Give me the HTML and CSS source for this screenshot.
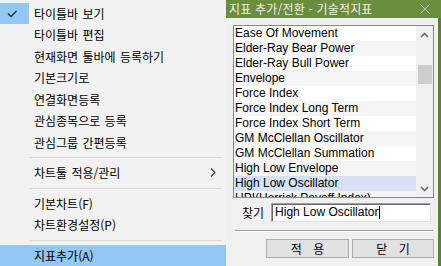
FILE: index.html
```html
<!DOCTYPE html>
<html lang="ko">
<head>
<meta charset="utf-8">
<title>지표 추가</title>
<link rel="stylesheet" href="styles.css">
</head>
<body>
<div class="screen">
  <div class="menu">
    <div class="item checked">
      <span class="gutter"><svg width="29" height="21" viewBox="0 0 29 21"><polyline points="8,10.5 11,13.5 16.5,8" fill="none" stroke="#2b2b2b" stroke-width="1.4"/></svg></span>
      <span class="label">타이틀바 보기</span>
    </div>
    <div class="item"><span class="gutter"></span><span class="label">타이틀바 편집</span></div>
    <div class="item"><span class="gutter"></span><span class="label">현재화면 툴바에 등록하기</span></div>
    <div class="item"><span class="gutter"></span><span class="label">기본크기로</span></div>
    <div class="item"><span class="gutter"></span><span class="label">연결화면등록</span></div>
    <div class="item"><span class="gutter"></span><span class="label">관심종목으로 등록</span></div>
    <div class="item"><span class="gutter"></span><span class="label">관심그룹 간편등록</span></div>
    <div class="sep"></div>
    <div class="item"><span class="gutter"></span><span class="label">차트툴 적용/관리</span>
      <svg class="arrow" width="6" height="9" viewBox="0 0 6 9"><polyline points="1,0.5 5,4.5 1,8.5" fill="none" stroke="#333" stroke-width="1.1"/></svg>
    </div>
    <div class="sep"></div>
    <div class="item"><span class="gutter"></span><span class="label">기본차트(F)</span></div>
    <div class="item"><span class="gutter"></span><span class="label">차트환경설정(P)</span></div>
    <div class="sep"></div>
    <div class="item active"><span class="gutter"></span><span class="label">지표추가(A)</span></div>
  </div>

  <div class="dialog">
    <div class="titlebar">
      <span class="title">지표 추가/전환 - 기술적지표</span>
      <svg class="close" width="10" height="10" viewBox="0 0 10 10"><path d="M0.5 0.5 L9.5 9.5 M9.5 0.5 L0.5 9.5" stroke="#b9c9a6" stroke-width="1"/></svg>
    </div>
    <div class="frame">
      <div class="body">
        <div class="listbox">
          <div class="rows">
            <div class="row">Ease Of Movement</div>
            <div class="row">Elder-Ray Bear Power</div>
            <div class="row">Elder-Ray Bull Power</div>
            <div class="row">Envelope</div>
            <div class="row">Force Index</div>
            <div class="row">Force Index Long Term</div>
            <div class="row">Force Index Short Term</div>
            <div class="row">GM McClellan Oscillator</div>
            <div class="row">GM McClellan Summation</div>
            <div class="row">High Low Envelope</div>
            <div class="row selected">High Low Oscillator</div>
            <div class="row">HPI(Herrick Payoff Index)</div>
          </div>
          <div class="scrollbar">
            <div class="sb-btn"><svg width="9" height="6" viewBox="0 0 9 6"><polyline points="1,5 4.5,1.5 8,5" fill="none" stroke="#606060" stroke-width="1.5"/></svg></div>
            <div class="thumb"></div>
            <div class="track"></div>
            <div class="sb-btn"><svg width="9" height="6" viewBox="0 0 9 6"><polyline points="1,1 4.5,4.5 8,1" fill="none" stroke="#606060" stroke-width="1.5"/></svg></div>
          </div>
        </div>
        <div class="search">
          <span class="find">찾기</span>
          <div class="input">High Low Oscillator<span class="caret"></span></div>
        </div>
        <div class="etched"></div>
        <div class="buttons">
          <button class="btn apply">적 용</button>
          <button class="btn closebtn">닫 기</button>
        </div>
      </div>
      <div class="edge"></div>
    </div>
  </div>
</div>
</body>
</html>
```
FILE: styles.css
```css
html, body {
  margin: 0;
  padding: 0;
}
body {
  width: 441px;
  height: 266px;
  overflow: hidden;
  background: #f0f0f0;
  font-family: "Noto Sans CJK KR", "Noto Sans", sans-serif;
  font-size: 12px;
  color: #000;
}
.screen {
  display: flex;
  width: 441px;
  height: 266px;
}

/* context menu */
.menu {
  width: 226px;
  flex: none;
  background: #f2f2f2;
  padding-top: 2.5px;
  box-sizing: border-box;
}
.item {
  display: flex;
  align-items: center;
  height: 21.5px;
}
.gutter {
  width: 29px;
  height: 100%;
  flex: none;
  display: flex;
  align-items: center;
  justify-content: center;
}
.checked .gutter {
  background: #94c8f4;
}
.label {
  flex: 1;
  margin-left: 5px;
  line-height: 21.5px;
  white-space: pre;
  word-spacing: 1px;
}
.arrow {
  margin-right: 10px;
  flex: none;
}
.item.active {
  background: #94c8f4;
}
.sep {
  height: 9px;
  display: flex;
  align-items: center;
  padding-left: 29px;
  padding-right: 4px;
}
.sep::after {
  content: "";
  flex: 1;
  height: 1px;
  background: #d7d7d7;
}

/* dialog */
.dialog {
  flex: 1;
  display: flex;
  flex-direction: column;
  min-width: 0;
}
.titlebar {
  height: 18px;
  flex: none;
  background: #6b8d3f;
  display: flex;
  align-items: center;
  padding-left: 3px;
  color: #eef2e6;
}
.title {
  flex: 1;
  line-height: 18px;
  letter-spacing: 0.2px;
  white-space: pre;
}
.close {
  margin-right: 11px;
}
.frame {
  flex: 1;
  display: flex;
}
.body {
  flex: 1;
  display: flex;
  flex-direction: column;
  padding: 7px 4px 0 7px;
  background: #f0f0f0;
}
.edge {
  width: 3px;
  background: #5e7e36;
}
.listbox {
  height: 173px;
  box-sizing: border-box;
  border: 1px solid #828790;
  background: #fff;
  display: flex;
}
.rows {
  flex: 1;
  overflow: hidden;
  font-family: "Liberation Sans", Arial, sans-serif;
  font-size: 12px;
}
.row {
  height: 15px;
  line-height: 15px;
  padding-left: 1px;
  white-space: nowrap;
}
.row:nth-child(even) {
  background: #f5f5f5;
}
.row.selected {
  background: #d6e2f3;
}
.scrollbar {
  width: 17px;
  flex: none;
  background: #f0f0f0;
  display: flex;
  flex-direction: column;
}
.sb-btn {
  height: 17px;
  display: flex;
  align-items: center;
  justify-content: center;
}
.thumb {
  margin: 22px 1px 0 2px;
  height: 19px;
  background: #cdcdcd;
}
.track {
  flex: 1;
}
.search {
  display: flex;
  align-items: center;
  margin-top: 5px;
  height: 19px;
}
.find {
  margin-left: 9px;
  margin-right: 7px;
  line-height: 19px;
}
.input {
  width: 160px;
  height: 19px;
  box-sizing: border-box;
  border: 1px solid;
  border-color: #a0a0a0 #e3e3e3 #e3e3e3 #a0a0a0;
  box-shadow: inset 1px 1px 0 #696969;
  background: #fff;
  font-family: "Liberation Sans", Arial, sans-serif;
  font-size: 12px;
  line-height: 17px;
  padding-left: 3px;
  display: flex;
  align-items: center;
  white-space: nowrap;
}
.caret {
  display: inline-block;
  width: 1px;
  height: 13px;
  background: #000;
  margin-left: 1px;
}
.etched {
  margin: 8px 1px 0 2px;
  height: 1px;
  background: #a0a0a0;
  border-bottom: 1px solid #fff;
}
.buttons {
  display: flex;
  gap: 3px;
  margin-top: 7px;
  padding-left: 33px;
}
.btn {
  height: 19px;
  box-sizing: border-box;
  border: 1px solid #adadad;
  background: #e1e1e1;
  font-family: "Noto Sans CJK KR", sans-serif;
  font-size: 12px;
  color: #000;
  padding: 0;
  line-height: 17px;
  margin: 0;
  word-spacing: 8px;
}
.apply {
  width: 83px;
}
.closebtn {
  width: 82px;
}
```
